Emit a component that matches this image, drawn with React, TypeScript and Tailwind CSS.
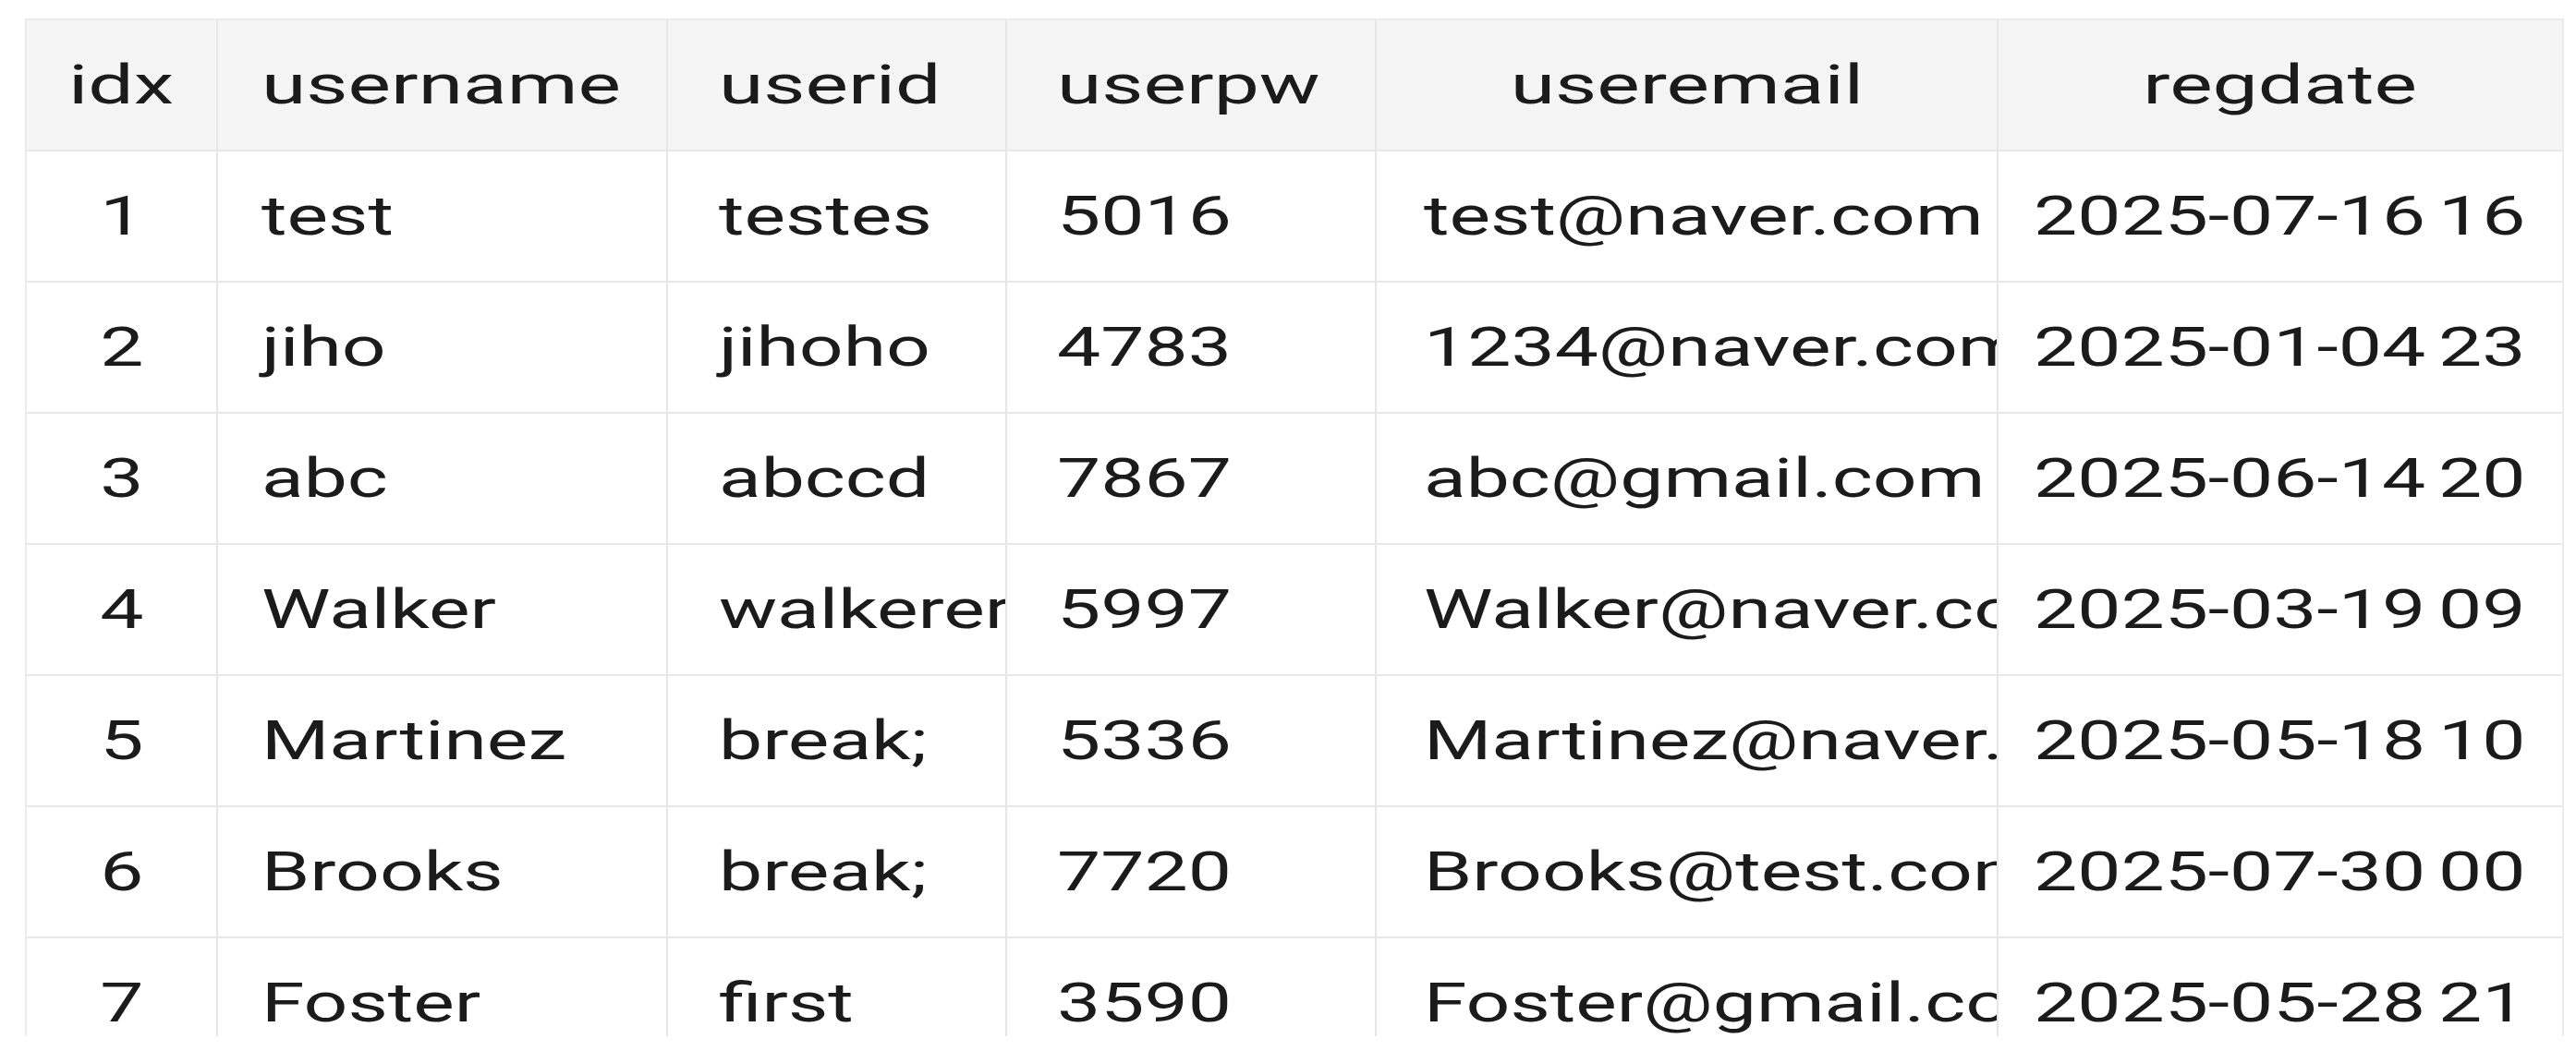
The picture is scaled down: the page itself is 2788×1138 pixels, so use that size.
import React from "react";

const rows: string[][] = [
  ["1", "test", "testes", "5016", "test@naver.com", "2025-07-16 16"],
  ["2", "jiho", "jihoho", "4783", "1234@naver.com", "2025-01-04 23"],
  ["3", "abc", "abccd", "7867", "abc@gmail.com", "2025-06-14 20"],
  ["4", "Walker", "walkerer", "5997", "Walker@naver.com", "2025-03-19 09"],
  ["5", "Martinez", "break;", "5336", "Martinez@naver.com", "2025-05-18 10"],
  ["6", "Brooks", "break;", "7720", "Brooks@test.com", "2025-07-30 00"],
  ["7", "Foster", "first", "3590", "Foster@gmail.com", "2025-05-28 21"],
];

const headers = ["idx", "username", "userid", "userpw", "useremail", "regdate"];

const dataCell = [
  "justify-center border-r-2",
  "justify-start pl-[47px] border-r-2",
  "justify-start pl-[55px] border-r-2",
  "justify-start pl-[54px] border-r-2",
  "justify-start pl-[51px] border-r-2",
  "justify-start pl-[38px] [word-spacing:-5px]",
];

const headCell = [
  "justify-center border-r-2",
  "justify-start pl-[47px] border-r-2",
  "justify-start pl-[55px] border-r-2",
  "justify-start pl-[54px] border-r-2",
  "justify-center border-r-2",
  "justify-center",
];

function HeadTxt({ text, center }: { text: string; center: boolean }) {
  return (
    <span
      className={
        "inline-block whitespace-nowrap scale-x-[1.46] " +
        (center ? "origin-center" : "origin-left")
      }
    >
      {text}
    </span>
  );
}

function DataTxt({ text, center }: { text: string; center: boolean }) {
  return (
    <span
      className={
        "inline-block whitespace-nowrap scale-x-[1.4] " +
        (center ? "origin-center" : "origin-left")
      }
    >
      {text}
    </span>
  );
}

export default function App() {
  return (
    <div
      className="w-[2788px] h-[1138px] overflow-hidden bg-white pt-[20px] text-[60px] leading-none text-[#1b1b1b]"
      style={{ fontFamily: "Roboto, 'Noto Sans', sans-serif" }}
    >
      <div className="ml-[27px] w-[2748px] h-[1102px] overflow-hidden border-l-2 border-r-2 border-t-2 border-[#ebebeb]">
        <div className="grid grid-cols-[207px_487px_367px_400px_673px_1fr] h-[142px] bg-[#f5f5f5] border-b-2 border-[#e8e8e8]">
          {headers.map((h, i) => (
            <div
              key={h}
              className={
                "flex items-center overflow-hidden border-[#e6e6e6] " + headCell[i]
              }
            >
              <HeadTxt text={h} center={i === 0 || i >= 4} />
            </div>
          ))}
        </div>
        {rows.map((r) => (
          <div
            key={r[0]}
            className="grid grid-cols-[207px_487px_367px_400px_673px_1fr] h-[142px] border-b-2 border-[#e8e8e8] bg-white"
          >
            {r.map((c, i) => (
              <div
                key={i}
                className={
                  "flex items-center overflow-hidden border-[#e6e6e6] " + dataCell[i]
                }
              >
                <DataTxt text={c} center={i === 0} />
              </div>
            ))}
          </div>
        ))}
      </div>
    </div>
  );
}
